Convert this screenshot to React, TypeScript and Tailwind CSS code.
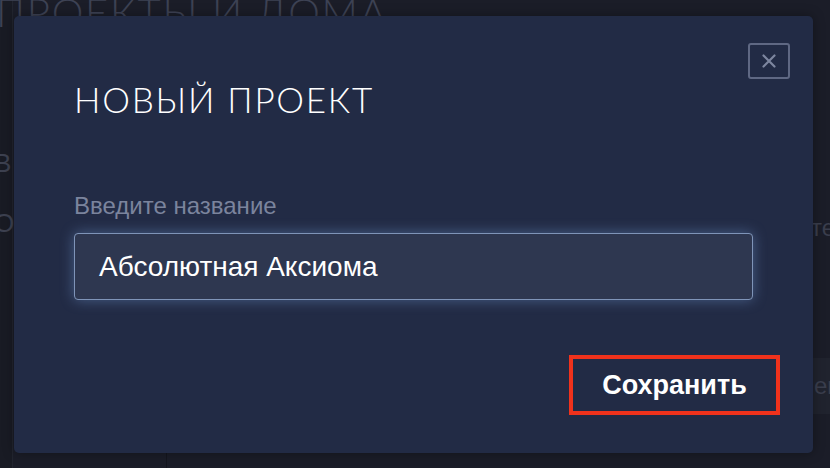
import React from "react";

export default function App() {
  return (
    <div className="relative w-[830px] h-[468px] overflow-hidden bg-[#1b1d28]" style={{ fontFamily: '"Liberation Sans", Arial, sans-serif' }}>
      {/* background page (dimmed) */}
      <div className="flex h-full">
        <div className="w-[13px] h-full border-r border-[#22252f] bg-[#191b24] flex flex-col">
          <div className="mt-[148px] text-[26px] leading-[30px] text-[#3d4150] -ml-[6px]">В</div>
          <div className="mt-[30px] text-[26px] leading-[30px] text-[#3d4150] -ml-[6px]">О</div>
        </div>
        <div className="flex-1 flex flex-col">
          <div className="-mt-[10px] -ml-[17px] text-[40px] leading-[44px] font-light tracking-[0.045em] text-[#3d4254] whitespace-nowrap" style={{ fontFamily: 'Lato, "Open Sans", sans-serif' }}>
            ПРОЕКТЫ И ДОМА
          </div>
          <div className="flex-1" />
          <div className="h-[16px] flex">
            <div className="w-[154px] border-r border-[#14161e]" />
          </div>
        </div>
        <div className="w-[17px] h-full flex flex-col">
          <div className="mt-[213px] text-[24px] leading-[30px] text-[#3a3e4d] -ml-[2px] whitespace-nowrap">те</div>
          <div className="mt-[115px] h-[56px] bg-[#20232e] flex items-center text-[24px] text-[#3a3e4d] whitespace-nowrap pl-[1px]">ек</div>
        </div>
      </div>

      {/* modal */}
      <div className="absolute left-[14px] top-[16px] w-[799px] h-[437px] rounded-[5px] bg-[#222b45] shadow-[0_0_12px_rgba(0,0,0,0.35)] flex flex-col pl-[60px] pr-[33px]">
        <div className="flex justify-end pt-[27px]">
          <button className="w-[42px] h-[36px] mr-[-10px] rounded-[3px] border-2 border-[#5f6883] flex items-center justify-center">
            <svg width="16" height="16" viewBox="0 0 16 16" fill="none" stroke="#7d869f" strokeWidth="2.2" strokeLinecap="round">
              <path d="M2.5 2.5 L13.5 13.5 M13.5 2.5 L2.5 13.5" />
            </svg>
          </button>
        </div>
        <div
          className="-mt-[2px] text-[35px] leading-[44px] font-light tracking-[0.05em] text-white whitespace-nowrap"
          style={{ fontFamily: 'Lato, "Open Sans", sans-serif', fontWeight: 300 }}
        >
          НОВЫЙ ПРОЕКТ
        </div>
        <div className="mt-[71px] text-[24px] leading-[28px] text-[#7b849d]">Введите название</div>
        <div className="mt-[13px] mr-[27px] h-[67px] rounded-[4px] border-[1.5px] border-[#7f94b8] bg-[#2e3750] shadow-[0_0_14px_rgba(120,160,220,0.45)] flex items-center pl-[24px]">
          <span className="text-[28px] text-white">Абсолютная Аксиома</span>
        </div>
        <div className="flex justify-end mt-[55px]">
          <button className="w-[211px] h-[60px] border-[4px] border-[#f0321c] flex items-center justify-center text-[27px] font-bold text-white bg-[#222b45]">
            Сохранить
          </button>
        </div>
      </div>
    </div>
  );
}
